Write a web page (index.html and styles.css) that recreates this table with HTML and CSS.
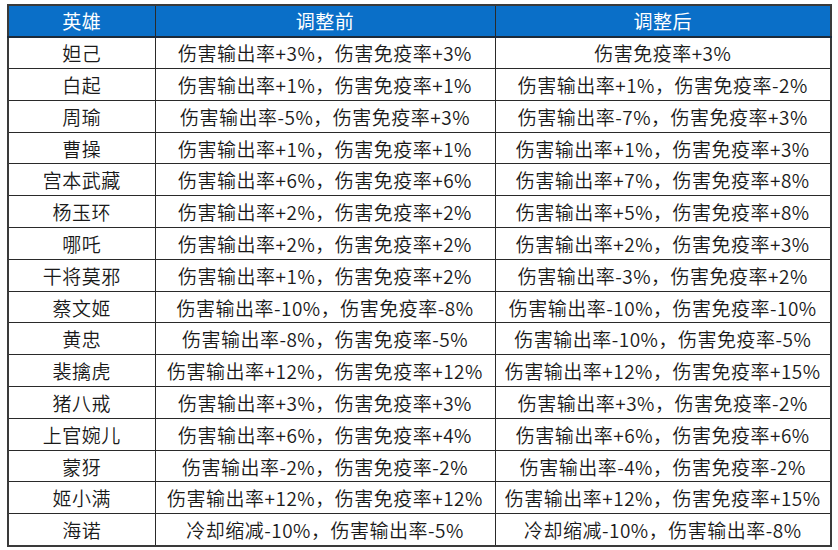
FILE: index.html
```html
<!DOCTYPE html>
<html lang="zh-CN">
<head>
<meta charset="utf-8">
<link rel="stylesheet" href="styles.css">
</head>
<body>
<div class="sheet">
<table class="grid">
<colgroup><col class="c1"><col class="c2"><col class="c3"></colgroup>
<thead>
<tr><th>英雄</th><th>调整前</th><th>调整后</th></tr>
</thead>
<tbody>
<tr><td>妲己</td><td>伤害输出率+3%，伤害免疫率+3%</td><td>伤害免疫率+3%</td></tr>
<tr><td>白起</td><td>伤害输出率+1%，伤害免疫率+1%</td><td>伤害输出率+1%，伤害免疫率-2%</td></tr>
<tr><td>周瑜</td><td>伤害输出率-5%，伤害免疫率+3%</td><td>伤害输出率-7%，伤害免疫率+3%</td></tr>
<tr><td>曹操</td><td>伤害输出率+1%，伤害免疫率+1%</td><td>伤害输出率+1%，伤害免疫率+3%</td></tr>
<tr><td>宫本武藏</td><td>伤害输出率+6%，伤害免疫率+6%</td><td>伤害输出率+7%，伤害免疫率+8%</td></tr>
<tr><td>杨玉环</td><td>伤害输出率+2%，伤害免疫率+2%</td><td>伤害输出率+5%，伤害免疫率+8%</td></tr>
<tr><td>哪吒</td><td>伤害输出率+2%，伤害免疫率+2%</td><td>伤害输出率+2%，伤害免疫率+3%</td></tr>
<tr><td>干将莫邪</td><td>伤害输出率+1%，伤害免疫率+2%</td><td>伤害输出率-3%，伤害免疫率+2%</td></tr>
<tr><td>蔡文姬</td><td>伤害输出率-10%，伤害免疫率-8%</td><td>伤害输出率-10%，伤害免疫率-10%</td></tr>
<tr><td>黄忠</td><td>伤害输出率-8%，伤害免疫率-5%</td><td>伤害输出率-10%，伤害免疫率-5%</td></tr>
<tr><td>裴擒虎</td><td>伤害输出率+12%，伤害免疫率+12%</td><td>伤害输出率+12%，伤害免疫率+15%</td></tr>
<tr><td>猪八戒</td><td>伤害输出率+3%，伤害免疫率+3%</td><td>伤害输出率+3%，伤害免疫率-2%</td></tr>
<tr><td>上官婉儿</td><td>伤害输出率+6%，伤害免疫率+4%</td><td>伤害输出率+6%，伤害免疫率+6%</td></tr>
<tr><td>蒙犽</td><td>伤害输出率-2%，伤害免疫率-2%</td><td>伤害输出率-4%，伤害免疫率-2%</td></tr>
<tr><td>姬小满</td><td>伤害输出率+12%，伤害免疫率+12%</td><td>伤害输出率+12%，伤害免疫率+15%</td></tr>
<tr><td>海诺</td><td>冷却缩减-10%，伤害输出率-5%</td><td>冷却缩减-10%，伤害输出率-8%</td></tr>
</tbody>
</table>
</div>
</body>
</html>
```
FILE: styles.css
```css
html, body {
  margin: 0;
  padding: 0;
  background: #ffffff;
}
.sheet {
  padding: 4px 0 0 7px;
}
.grid {
  border-collapse: collapse;
  table-layout: fixed;
  width: 823px;
  font-family: "Noto Sans CJK SC", "Noto Sans", sans-serif;
  font-size: 19px;
  font-weight: 350;
  letter-spacing: 0.5px;
  color: #1a1a1a;
  border: 2px solid #3a3a3a;
}
.c1 { width: 147px; }
.c2 { width: 340px; }
.c3 { width: 336px; }
.grid th, .grid td {
  border: 1px solid #2a2a2a;
  height: 31.8px;
  padding: 0;
  text-align: center;
  vertical-align: middle;
  white-space: nowrap;
  line-height: 1;
  box-sizing: border-box;
}
.grid th {
  background: #0a6fc8;
  color: #ffffff;
  font-weight: normal;
  border-bottom: 2px solid #1c2a3a;
}
```
